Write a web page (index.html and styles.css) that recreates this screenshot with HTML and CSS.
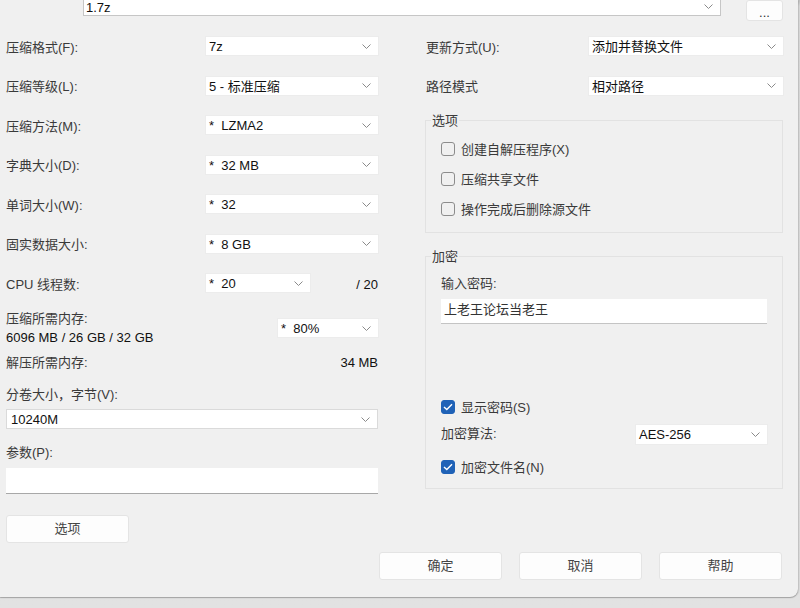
FILE: index.html
```html
<!DOCTYPE html>
<html lang="zh-CN">
<head>
<meta charset="utf-8">
<title>添加到压缩包</title>
<link rel="stylesheet" href="styles.css">
</head>
<body>
<div class="dialog">
  <div class="top">
    <div class="combo big"><span class="val">1.7z</span><svg class="chev" width="9" height="5" viewBox="0 0 9 5"><polyline points="0.5,0.5 4.5,4.5 8.5,0.5"/></svg></div>
    <div class="btn dots">...</div>
  </div>
  <div class="cols">
    <div class="left">
      <div class="row"><span class="lbl">压缩格式(F):</span><div class="combo"><span class="val">7z</span><svg class="chev" width="9" height="5" viewBox="0 0 9 5"><polyline points="0.5,0.5 4.5,4.5 8.5,0.5"/></svg></div></div>
      <div class="row"><span class="lbl">压缩等级(L):</span><div class="combo"><span class="val">5 - 标准压缩</span><svg class="chev" width="9" height="5" viewBox="0 0 9 5"><polyline points="0.5,0.5 4.5,4.5 8.5,0.5"/></svg></div></div>
      <div class="row"><span class="lbl">压缩方法(M):</span><div class="combo"><span class="val">*  LZMA2</span><svg class="chev" width="9" height="5" viewBox="0 0 9 5"><polyline points="0.5,0.5 4.5,4.5 8.5,0.5"/></svg></div></div>
      <div class="row"><span class="lbl">字典大小(D):</span><div class="combo"><span class="val">*  32 MB</span><svg class="chev" width="9" height="5" viewBox="0 0 9 5"><polyline points="0.5,0.5 4.5,4.5 8.5,0.5"/></svg></div></div>
      <div class="row"><span class="lbl">单词大小(W):</span><div class="combo"><span class="val">*  32</span><svg class="chev" width="9" height="5" viewBox="0 0 9 5"><polyline points="0.5,0.5 4.5,4.5 8.5,0.5"/></svg></div></div>
      <div class="row"><span class="lbl">固实数据大小:</span><div class="combo"><span class="val">*  8 GB</span><svg class="chev" width="9" height="5" viewBox="0 0 9 5"><polyline points="0.5,0.5 4.5,4.5 8.5,0.5"/></svg></div></div>
      <div class="row"><span class="lbl">CPU 线程数:</span><div class="combo cpu"><span class="val">*  20</span><svg class="chev" width="9" height="5" viewBox="0 0 9 5"><polyline points="0.5,0.5 4.5,4.5 8.5,0.5"/></svg></div><span class="rt">/ 20</span></div>
      <div class="mem">
        <div class="memtxt"><div class="line">压缩所需内存:</div><div class="line num">6096 MB / 26 GB / 32 GB</div></div>
        <div class="combo pct"><span class="val">*  80%</span><svg class="chev" width="9" height="5" viewBox="0 0 9 5"><polyline points="0.5,0.5 4.5,4.5 8.5,0.5"/></svg></div>
      </div>
      <div class="line2 unmem"><span>解压所需内存:</span><span class="num">34 MB</span></div>
      <div class="line2 vol">分卷大小，字节(V):</div>
      <div class="combo wide"><span class="val">10240M</span><svg class="chev" width="9" height="5" viewBox="0 0 9 5"><polyline points="0.5,0.5 4.5,4.5 8.5,0.5"/></svg></div>
      <div class="line2 par">参数(P):</div>
      <div class="input params"></div>
      <div class="btn opt">选项</div>
    </div>
    <div class="right">
      <div class="row"><span class="lbl r">更新方式(U):</span><div class="combo rc"><span class="val">添加并替换文件</span><svg class="chev" width="9" height="5" viewBox="0 0 9 5"><polyline points="0.5,0.5 4.5,4.5 8.5,0.5"/></svg></div></div>
      <div class="row"><span class="lbl r">路径模式</span><div class="combo rc"><span class="val">相对路径</span><svg class="chev" width="9" height="5" viewBox="0 0 9 5"><polyline points="0.5,0.5 4.5,4.5 8.5,0.5"/></svg></div></div>
      <div class="group g1">
        <span class="legend">选项</span>
        <div class="chk"><span class="box"></span><span>创建自解压程序(X)</span></div>
        <div class="chk"><span class="box"></span><span>压缩共享文件</span></div>
        <div class="chk"><span class="box"></span><span>操作完成后删除源文件</span></div>
      </div>
      <div class="group g2">
        <span class="legend">加密</span>
        <div class="line2">输入密码:</div>
        <div class="input pwd">上老王论坛当老王</div>
        <div class="chk c20 show"><span class="box on"><svg width="10" height="8" viewBox="0 0 10 8"><polyline points="1,4 3.8,6.6 9,1.2"/></svg></span><span>显示密码(S)</span></div>
        <div class="algo"><span>加密算法:</span><div class="combo ac"><span class="val">AES-256</span><svg class="chev" width="9" height="5" viewBox="0 0 9 5"><polyline points="0.5,0.5 4.5,4.5 8.5,0.5"/></svg></div></div>
        <div class="chk c20 encn"><span class="box on"><svg width="10" height="8" viewBox="0 0 10 8"><polyline points="1,4 3.8,6.6 9,1.2"/></svg></span><span>加密文件名(N)</span></div>
      </div>
    </div>
  </div>
  <div class="footer">
    <div class="btn">确定</div>
    <div class="btn">取消</div>
    <div class="btn">帮助</div>
  </div>
</div>
</body>
</html>
```
FILE: styles.css
```css
html, body {
  margin: 0;
  padding: 0;
}
body {
  background: linear-gradient(#c4c4c4, #dedede 6px, #e2e2e2);
  font-family: "Liberation Sans", "Noto Sans CJK SC", sans-serif;
  font-size: 13px;
  line-height: 16px;
  color: #3a3a3a;
  width: 800px;
  height: 608px;
  overflow: hidden;
}
.dialog {
  width: 798px;
  height: 597px;
  background: #f0f0f0;
  border-bottom-right-radius: 8px;
  box-shadow: 0 1px 1px rgba(0,0,0,0.25), 1px 0 2px rgba(0,0,0,0.15);
}
.top {
  display: flex;
  align-items: flex-start;
  height: 16px;
}
.combo {
  display: flex;
  align-items: center;
  background: #fff;
  box-sizing: border-box;
  height: 18px;
  width: 172px;
  padding-left: 3px;
  color: #111;
  box-shadow: 0 0 0 1px #ececec;
}
.combo .val {
  white-space: pre;
  padding-top: 2px;
}
.chev {
  margin-left: auto;
  margin-right: 7px;
  flex: none;
}
.chev polyline {
  fill: none;
  stroke: #8a8a8a;
  stroke-width: 1;
}
.combo.big {
  margin-left: 83px;
  margin-top: -5px;
  width: 638px;
  height: 21px;
  border: 1px solid #c6c6c6;
  border-top: none;
  box-shadow: none;
  padding-top: 3px;
  padding-left: 2px;
}
.btn {
  box-sizing: border-box;
  background: #fdfdfd;
  border: 1px solid #e4e4e4;
  border-radius: 3px;
  display: flex;
  align-items: center;
  justify-content: center;
  color: #444;
}
.btn.dots {
  margin-left: 25px;
  width: 37px;
  height: 21px;
  margin-top: 0;
  padding-top: 4px;
  color: #333;
}
.cols {
  display: flex;
  margin-top: 10.25px;
}
.left {
  width: 372px;
  margin-left: 6px;
}
.right {
  width: 358px;
  margin-left: 47px;
}
.row {
  height: 39.5px;
  display: flex;
  align-items: center;
}
.lbl {
  width: 200px;
  flex: none;
  padding-top: 3px;
}
.lbl.r {
  width: 163px;
  padding-left: 1px;
}
.combo.cpu {
  width: 104px;
}
.rt {
  margin-left: auto;
  color: #111;
  padding-top: 4px;
}
.mem {
  display: flex;
  align-items: center;
  margin-top: 6px;
}
.memtxt .line {
  line-height: 19px;
}
.num {
  color: #111;
}
.combo.pct {
  width: 100px;
  margin-left: auto;
  margin-top: 1px;
}
.line2 {
  height: 20px;
  display: flex;
  align-items: center;
}
.unmem {
  justify-content: space-between;
  margin-top: 6.5px;
}
.vol {
  margin-top: 12px;
}
.combo.wide {
  width: 372px;
  height: 20px;
  margin-top: 4px;
  box-shadow: none;
  border: 1px solid #dadada;
  padding-left: 4px;
}
.par {
  margin-top: 14px;
}
.input {
  background: #fff;
  box-sizing: border-box;
  border-bottom: 1px solid #a8a8a8;
}
.params {
  width: 372px;
  height: 26px;
  margin-top: 5px;
}
.btn.opt {
  width: 123px;
  height: 28px;
  margin-top: 21px;
}
.combo.rc {
  width: 194px;
}
.group {
  position: relative;
  border: 1px solid #e2e2e2;
  box-sizing: border-box;
}
.legend {
  position: absolute;
  top: -8px;
  left: 5px;
  line-height: 16px;
  padding: 0 1px;
  background: #f0f0f0;
}
.g1 {
  margin-top: 14.75px;
  padding: 13px 15px 8px 15px;
}
.g2 {
  margin-top: 23px;
  padding: 17px 15px 11px 15px;
}
.chk {
  height: 30px;
  display: flex;
  align-items: center;
  gap: 6px;
}
.chk > span:last-child {
  padding-top: 1px;
}
.chk.c20 {
  height: 20px;
}
.box {
  width: 14px;
  height: 14px;
  box-sizing: border-box;
  border: 1px solid #8c8c8c;
  border-radius: 3px;
  flex: none;
  display: flex;
  align-items: center;
  justify-content: center;
}
.box.on {
  background: #1f62b7;
  border-color: #1f62b7;
}
.box svg polyline {
  fill: none;
  stroke: #fff;
  stroke-width: 1.4;
}
.pwd {
  width: 326px;
  height: 25px;
  margin-top: 5px;
  padding: 3px 0 0 3px;
  color: #333;
  border-bottom-color: #c4c4c4;
}
.show {
  margin-top: 73px;
}
.algo {
  margin-top: 7px;
  height: 20px;
  display: flex;
  align-items: center;
}
.combo.ac {
  width: 131px;
  height: 19px;
  margin-left: auto;
}
.encn {
  margin-top: 13px;
}
.footer {
  display: flex;
  justify-content: flex-end;
  gap: 17px;
  padding-right: 16px;
  margin-top: 9px;
}
.footer .btn {
  width: 123px;
  height: 28px;
}
```
